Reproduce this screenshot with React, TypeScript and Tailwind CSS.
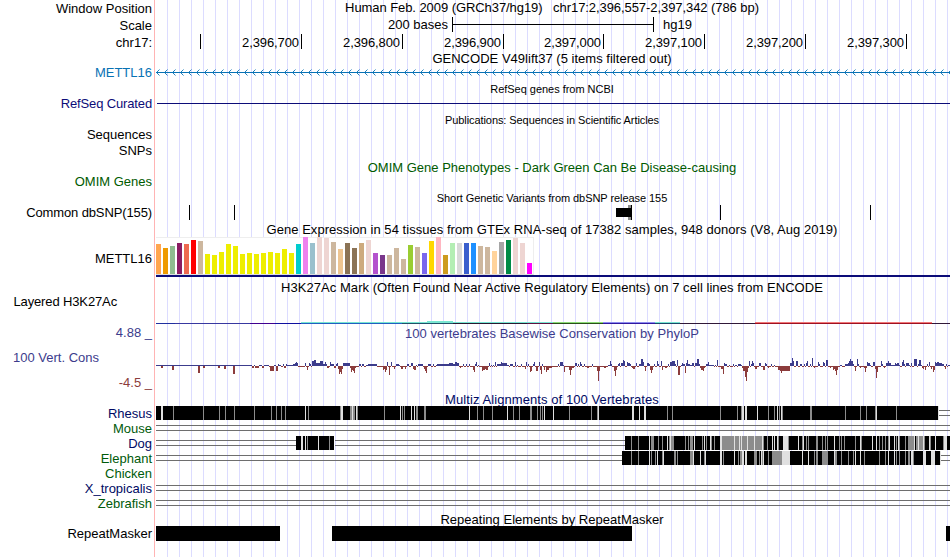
const ORIGIN = 156
const WIDTH = 794

const labels = [
  { text: 'Window Position', cls: 'h-[17px]' },
  { text: 'Scale', cls: 'h-[17px]' },
  { text: 'chr17:', cls: 'h-[30px]' },
  { text: 'METTL16', cls: 'h-[31px] text-[#0872b4]' },
  { text: 'RefSeq Curated', cls: 'h-[31px] tracking-[-0.14px] text-[#0c0c78]' },
  { text: 'Sequences', cls: 'h-[16px]' },
  { text: 'SNPs', cls: 'h-[31px]' },
  { text: 'OMIM Genes', cls: 'h-[31px] text-[#005a00]' },
  { text: 'Common dbSNP(155)', cls: 'h-[46px] tracking-[-0.12px]' },
  { text: 'METTL16', cls: 'h-[43px]' },
  { text: 'Layered H3K27Ac', cls: 'h-[31px] pr-[35px] tracking-[-0.13px]' },
  { text: '4.88 _', cls: 'h-[25px] text-[#3c3c8c]' },
  { text: '100 Vert. Cons', cls: 'h-[25px] pr-[53px] text-[#3c3c8c]' },
  { text: '-4.5 _', cls: 'h-[31px] text-[#8c3c3c]' },
  { text: 'Rhesus', cls: 'h-[15px] text-[#000a64]' },
  { text: 'Mouse', cls: 'h-[15px] text-[#005a0a]' },
  { text: 'Dog', cls: 'h-[15px] text-[#000a64]' },
  { text: 'Elephant', cls: 'h-[15px] text-[#005a0a]' },
  { text: 'Chicken', cls: 'h-[15px] text-[#005a0a]' },
  { text: 'X_tropicalis', cls: 'h-[15px] text-[#000a64]' },
  { text: 'Zebrafish', cls: 'h-[30px] text-[#005a0a]' },
  { text: 'RepeatMasker', cls: 'h-[15px]' },
]

const ruler = [
  { text: '', cls: 'w-[45px]' },
  { text: '2,396,700', cls: 'w-[101px]' },
  { text: '2,396,800', cls: 'w-[101px]' },
  { text: '2,396,900', cls: 'w-[101px]' },
  { text: '2,397,000', cls: 'w-[100px]' },
  { text: '2,397,100', cls: 'w-[101px]' },
  { text: '2,397,200', cls: 'w-[101px]' },
  { text: '2,397,300', cls: 'w-[101px]' },
]

// [height, color] per GTEx tissue
const tissues: [number, string][] = [
  [30, '#ffa54f'], [26, '#ee9a00'], [28, '#8fbc8f'], [31, '#8b1c62'], [30, '#ee6a50'], [34, '#ff0000'],
  [33, '#cdb79e'], [20, '#eeee00'], [19, '#eeee00'], [22, '#eeee00'], [30, '#eeee00'], [28, '#eeee00'],
  [20, '#eeee00'], [21, '#eeee00'], [20, '#eeee00'], [21, '#eeee00'], [22, '#eeee00'], [21, '#eeee00'],
  [25, '#eeee00'], [21, '#eeee00'], [30, '#00cdcd'], [37, '#ee82ee'], [31, '#9ac0cd'], [37, '#eed5d2'],
  [36, '#eed5d2'], [32, '#cdb79e'], [25, '#eec591'], [31, '#8b7355'], [26, '#8b7355'], [31, '#cdaa7d'],
  [34, '#eed5d2'], [21, '#b452cd'], [19, '#7a378b'], [19, '#cdb79e'], [26, '#cdb79e'], [15, '#cdb79e'],
  [29, '#9acd32'], [27, '#cdb79e'], [21, '#7a67ee'], [33, '#ffd700'], [37, '#ffb6c1'], [19, '#cd9b1d'],
  [31, '#b4eeb4'], [31, '#d9d9d9'], [31, '#3a5fcd'], [31, '#1e90ff'], [28, '#cdb79e'], [27, '#cdb79e'],
  [23, '#ffd39b'], [32, '#a6a6a6'], [34, '#008b45'], [36, '#eed5d2'], [31, '#eed5d2'], [11, '#ff00ff'],
]

// [start, end, color] of the H3K27Ac base line
const h3k27ac: [number, number, string][] = [
  [156, 175, '#2030a0'], [175, 250, '#3838a0'], [250, 275, '#400090'], [275, 301, '#1010a0'],
  [301, 402, '#2060c0'], [402, 453, '#205068'], [453, 527, '#281830'], [527, 553, '#601040'],
  [553, 603, '#285018'], [603, 655, '#3018a0'], [655, 680, '#184868'], [680, 755, '#301838'],
  [755, 932, '#a01020'], [932, 950, '#301838'],
]

// "x:height" or "x:height:width", negative heights hang below the axis
const phyloP = [
  '156:1:96 161:-2:2 172:-4:2 198:-7:2 203:-2:2 218:-2:2 224:-3:2 233:-8:2 252:-2:2 254:1 255:-2:4 259:1:3',
  '262:-2:2 264:1:5 270:-5:2 272:-5:2 274:1:2 276:-5:2 278:2 279:1:2 283:2 286:2 284:-2:2 287:1:6 293:2:2 295:3',
  '296:4 297:3 305:3 307:-4 309:3 310:2 312:5 313:5 314:6:2 316:3:4 320:5:3 323:2:2 325:4 326:2 327:-2:2 330:4',
  '331:2:3 334:-2:2 336:2 337:3 338:-3 339:-8 340:-6 341:-8 342:-3 343:3:7 350:-2 351:-6:1 352:-4 353:-5 354:-7',
  '355:-2 359:2:2 362:2:2 366:1:2 368:2:9 383:-4 384:-3 385:-6 386:-4 387:4 389:-9 391:4 394:-3 396:2:3 399:1',
  '401:-3:2 405:-3 407:2:2 411:3:2 413:-3 414:-4 415:-4 416:1 418:2:2',
  '420:2:3 424:-3 425:-5 426:-7 428:2:3 433:2 436:1 437:2:8 445:2:4 449:3:4 453:2:2 455:4 456:4 457:3:2 460:-2',
  '463:2 466:2 469:2 473:-4 474:-6 475:2 476:4 478:1 482:-5 483:-4:2 485:-3 486:-4:2 489:3 491:1 493:1 495:4',
  '497:2:3 500:2 501:4 502:3:5 507:1:2 510:2:2 512:2 515:4 517:1 521:2 525:-3 526:4 528:2 530:-6 531:-5 533:2',
  '534:4 536:-5:2 539:4 540:-4 541:-8 542:2 544:-4 546:-6 547:-4:2 549:-2:3 558:2 560:4:3 563:1 564:-6 569:-4',
  '570:-9 571:-4 572:-2:2 575:3:2 578:2 580:4 581:2 584:2 587:-2:2 592:2 597:-5 598:-15 599:-5 604:-2:2 608:1:2',
  '610:5 611:2 614:-5 615:-10 616:-4 618:2 619:3 621:3:2 623:6 624:5 627:4 628:3:2 630:2 632:-2 633:-3:2 636:3',
  '639:2:2 641:7 642:7 643:4 645:-5 647:3:2 649:2 650:-4 651:-7 652:-4 654:2 657:5 658:2 661:5 662:-4 665:-2:2',
  '668:2 670:4:2 672:5:3 675:2 677:6 678:-9:2 681:1 682:3 683:2:2 685:-7 686:3 687:6 688:2:2',
  '690:1:3 692:3:2 695:3:2 697:7:2 699:2 700:-2 701:-4:2 703:-5 704:-2 706:2:2 708:4 709:1:5 715:1 717:6 721:-3:2',
  '723:-8 724:3 725:2:2 729:1 733:2 735:1:2 738:2:3 741:1 742:-2 743:-5 744:-5 745:-11 746:-15 747:-6 748:-2 749:5',
  '751:2 752:5 753:3 755:-3:2 759:3:2 763:-4:2 765:3 766:2 768:-2 771:2 774:1 778:-4:2 780:-5 781:-7 782:-5:8',
  '790:3 791:3 792:8 793:5 796:5:2 800:2:2 804:2 806:3 807:5 810:2 812:8 814:-2 818:4 819:2 823:4 824:3 826:6:2',
  '830:-2 833:-4 834:-3 835:-5 836:-9 837:-4 840:1:2 845:2:3 848:3 849:5 850:7 851:5:2 853:2 855:-5 857:7 858:2',
  '860:-2 864:-2 865:-6 866:-2 867:4 868:3:2 870:1 873:4:2 875:-3 876:-12 877:-6 881:5 882:2 884:-2 886:3 887:3',
  '888:5 889:3:2 891:1:4 895:3 896:2 897:3:2 899:1 902:4 903:6 904:2 906:3:3 909:1 911:3 914:7:3 918:2 919:6:2',
  '921:1 922:-2 923:-3 925:-4 927:2 929:4 931:-3 933:-6 934:-4 935:4 936:3 937:4:2 939:3:3 942:2:2 945:-3 946:2 948:1:2',
].join(' ')

// lists of weaker columns inside an aligned block, "x" or "x:width"
const alignments = [
  {
    blocks: [[156, 938]],
    lines: [[939, 950]],
    gray: '173 203 219 225 234 254 271 276 281 285 308 340 350:2 353:2 357 384 402 404 416:2 424:2 477 483 492 513 519 530:2 537 540 542 569 591 597 667 672 720 737 741 768 774 779 782 810:2 845 860 866 875 896',
    light: '161:2 305 341:2 352 356 400 411 414 469 507 544 553 598 632:2 639 644:2 742:2 745:2 757 777 781 876 938',
  },
  { blocks: [], lines: [[156, 950]], gray: '', light: '' },
  {
    blocks: [[296, 334], [625, 950]],
    lines: [[156, 296], [335, 625]],
    gray: '307 329 631 638 651:3 658 662 669 671:3 685 688 690:3 702 706 711 714 722:12 735:4 740 742:5 748:6 755:7 763 767 778 788 802 806 808 816:2 822 825 827 839 841 844 855 861 879 882 885 888 896 899 905 908:6 916:2 919:4 924 930 943',
    light: '301:2 305 318 649 667 670 694 704 710 720:2 734 739 741 747 754 762 772 774 777 783:5 798 803 834 860 872 876 889 894 898 914 918 923 929 935 944:3',
  },
  {
    blocks: [[622, 940]],
    lines: [[941, 950]],
    gray: '631 638 651 655 662 674:2 677 690:3 704 723 738 740:2 754:3 759 762 768 772:10 814 816:2 822:6 835:2 841 848 853 864 879 885 896 899 905 908:2 913',
    light: '649 657 663 693 700 705 720:2 734 742:2 745:2 761 763 782:8 802 808 834 855 860 888 894 911:2 923:3 931:4 940',
  },
  { blocks: [], lines: [], gray: '', light: '' },
  { blocks: [], lines: [[156, 950]], gray: '', light: '' },
  { blocks: [], lines: [[156, 950]], gray: '', light: '' },
]
alignments[3].lines.push([156, 622])

function parse(runs: string) {
  return runs.split(' ').map(r => {
    const [x, h, w] = r.split(':').map(Number)
    return { x, h, w: w || 1 }
  })
}

function Columns({ list, fill }: { list: string; fill: string }) {
  if (!list) return null
  return (
    <>
      {list.split(' ').map(item => {
        const [x, w] = item.split(':').map(Number)
        return <rect key={item} x={x} y="0" width={w || 1} height="14" fill={fill} />
      })}
    </>
  )
}

function Plot({ height, children }: { height: number; children?: React.ReactNode }) {
  return (
    <svg
      width={WIDTH}
      height={height}
      viewBox={`${ORIGIN} 0 ${WIDTH} ${height}`}
      shapeRendering="crispEdges"
      className="block shrink-0"
    >
      {children}
    </svg>
  )
}

function Title({ className, children }: { className: string; children: React.ReactNode }) {
  return <div className={`shrink-0 whitespace-pre pr-[2px] text-center leading-[15px] ${className}`}>{children}</div>
}

function PhyloP() {
  const bars = parse(phyloP)
  const up = bars.filter(b => b.h > 0)
  const down = bars.filter(b => b.h < 0)
  // columns without a positive score sit just under the axis
  const covered = new Set<number>()
  up.forEach(b => {
    for (let i = 0; i < b.w; i++) covered.add(b.x + i)
  })
  const rest: number[] = []
  for (let x = 252; x < 950; x++) if (!covered.has(x)) rest.push(x)

  return (
    <Plot height={40}>
      {rest.map(x => <rect key={x} x={x} y="14" width="1" height="1" fill="#8c3c3c" />)}
      {up.map(b => <rect key={b.x} x={b.x} y={14 - b.h} width={b.w} height={b.h} fill="#3c3c8c" />)}
      {down.map(b => <rect key={b.x} x={b.x} y="14" width={b.w} height={-b.h} fill="#8c3c3c" />)}
    </Plot>
  )
}

export default function App() {
  return (
    <div className="flex h-[557px] w-[950px] overflow-hidden bg-white font-['Liberation_Sans',Arial,sans-serif] text-[13px] leading-[15px] text-black">
      <div className="flex w-[155px] shrink-0 flex-col border-r border-[#ffb4b4] pt-px pr-[2px] text-right">
        {labels.map((label, i) => (
          <div key={i} className={`shrink-0 whitespace-pre ${label.cls}`}>{label.text}</div>
        ))}
      </div>

      <div className="ml-px flex w-[794px] shrink-0 flex-col bg-[linear-gradient(to_right,#dcdcff_1px,transparent_1px)] bg-[length:12px_100%] bg-[position:11px_0]">
        <Title className="h-[17px] tracking-[-0.07px]">Human Feb. 2009 (GRCh37/hg19)   chr17:2,396,557-2,397,342 (786 bp)</Title>
        <div className="flex h-[17px] shrink-0">
          <div className="w-[292px] text-right">200 bases</div>
          <div className="ml-1 flex h-[15px] w-[202px] flex-col border-x border-black">
            <div className="mt-[7px] h-px bg-black" />
          </div>
          <div className="ml-[9px]">hg19</div>
        </div>
        <div className="flex h-[17px] shrink-0">
          {ruler.map((tick, i) => (
            <div key={i} className={`h-[15px] shrink-0 border-r border-black pr-[2px] text-right leading-[17px] tracking-[-0.1px] ${tick.cls}`}>{tick.text}</div>
          ))}
        </div>

        <Title className="h-[18px] tracking-[0.02px]">GENCODE V49lift37 (5 items filtered out)</Title>
        <Plot height={13}>
          <rect x="156" y="3" width="794" height="1" fill="#0872b4" />
          {Array.from({ length: 100 }, (_, i) => (
            <path
              key={i}
              d={`M${159.5 + i * 8} 0.5l-3 3l3 3`}
              stroke="#0872b4"
              strokeWidth="0.9"
              fill="none"
              shapeRendering="auto"
            />
          ))}
        </Plot>

        <Title className="h-[21px] text-[11px] tracking-[-0.03px]">RefSeq genes from NCBI</Title>
        <div className="mb-[9px] ml-px h-px shrink-0 bg-[#0c0c78]" />
        <Title className="h-[47px] text-[11px] tracking-[-0.08px]">Publications: Sequences in Scientific Articles</Title>
        <Title className="h-[31px] text-[#005a00]">OMIM Gene Phenotypes - Dark Green Can Be Disease-causing</Title>
        <Title className="h-[14px] text-[11px] tracking-[-0.06px]">Short Genetic Variants from dbSNP release 155</Title>
        <Plot height={17}>
          <rect x="628" y="0" width="3" height="15" fill="#8c8c8c" />
          {[189, 234, 631, 720, 870].map(x => <rect key={x} x={x} y="0" width="1" height="15" />)}
          <rect x="616" y="3" width="16" height="9" />
        </Plot>

        <Title className="h-[15px] tracking-[0.04px]">Gene Expression in 54 tissues from GTEx RNA-seq of 17382 samples, 948 donors (V8, Aug 2019)</Title>
        <div className="flex h-[38px] w-[378px] shrink-0 items-end gap-[2px] border-y border-r border-t-[#eeeeee] border-r-[#eeeeee] border-b-[#dddddd] bg-white">
          {tissues.map(([height, color], i) => (
            <div key={i} className="w-[5px] shrink-0" style={{ height, backgroundColor: color }} />
          ))}
        </div>
        <div className="h-[2px] shrink-0 bg-[#0c0c78]" />

        <Title className="mt-[3px] h-[40px] tracking-[0.05px]">H3K27Ac Mark (Often Found Near Active Regulatory Elements) on 7 cell lines from ENCODE</Title>
        <Plot height={6}>
          {h3k27ac.map(([a, b, color]) => <rect key={a} x={a} y="3" width={b - a} height="1" fill={color} />)}
          <rect x="301" y="2" width="379" height="1" fill="#78e6d2" />
          <rect x="427" y="1" width="26" height="1" fill="#78e6d2" />
          <rect x="553" y="2" width="50" height="1" fill="#8cdc78" />
          <rect x="603" y="2" width="52" height="1" fill="#8c8cf0" />
          <rect x="755" y="2" width="177" height="1" fill="#f07878" />
        </Plot>
        <Title className="h-[26px] tracking-[0.04px] text-[#3c3c8c]">100 vertebrates Basewise Conservation by PhyloP</Title>
        <PhyloP />

        <Title className="h-[14px] tracking-[0.08px] text-[#000a64]">Multiz Alignments of 100 Vertebrates</Title>
        {alignments.map((row, i) => (
          <Plot key={i} height={15}>
            {row.lines.map(([a, b]) => (
              <path key={a} d={`M${a} 4.5H${b}M${a} 9.5H${b}`} stroke="#6e6e6e" />
            ))}
            {row.blocks.map(([a, b]) => <rect key={a} x={a} y="0" width={b - a} height="14" />)}
            <Columns list={row.gray} fill="#8c8c8c" />
            <Columns list={row.light} fill="#e0e0e0" />
          </Plot>
        ))}

        <Title className="mt-px h-[14px] tracking-[0.02px]">Repeating Elements by RepeatMasker</Title>
        <Plot height={15}>
          <rect x="156" y="0" width="124" height="15" />
          <rect x="332" y="0" width="300" height="15" />
          <rect x="946" y="0" width="4" height="15" />
        </Plot>
      </div>
    </div>
  )
}
